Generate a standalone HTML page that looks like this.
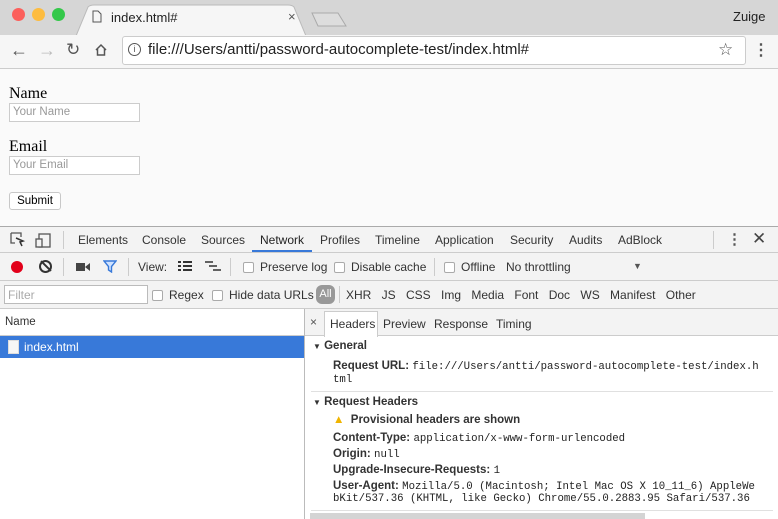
<!DOCTYPE html>
<html><head><style>
*{box-sizing:border-box;margin:0;padding:0}
body{width:778px;height:519px;overflow:hidden;background:#fafafa;font-family:"Liberation Sans",sans-serif;font-size:12px;color:#333;position:relative}
.a{position:absolute;white-space:nowrap}
.cb{display:inline-block;width:11px;height:11px;border:1px solid #aaa;border-radius:2px;background:#fff;vertical-align:-2px;margin-right:6px}
.mono{font-family:"Liberation Mono",monospace;font-size:10.7px;color:#222}
.b{font-weight:bold;color:#333;font-size:11.5px}
</style></head><body>
<!-- title bar -->
<div class="a" style="left:0;top:0;width:778px;height:35px;background:#d6d6d6"></div>
<div class="a" style="left:12px;top:8px;width:13px;height:13px;border-radius:50%;background:#fc605c"></div>
<div class="a" style="left:32px;top:8px;width:13px;height:13px;border-radius:50%;background:#fdbc40"></div>
<div class="a" style="left:52px;top:8px;width:13px;height:13px;border-radius:50%;background:#34c84a"></div>
<svg class="a" style="left:70px;top:2px" width="300" height="34"><path d="M6 34 L18 5 Q20 3 24 3 L218 3 Q222 3 224 5 L236 34Z" fill="#f6f6f6" stroke="#bbb"/><path d="M242 11 L268 11 L276 24 L248 24Z" fill="#ddd" stroke="#aaa"/></svg>
<svg class="a" style="left:92px;top:10px" width="10" height="13"><path d="M1 1H6L9 4V12H1Z" fill="none" stroke="#555"/></svg>
<div class="a" style="left:111px;top:10px;font-size:13px;color:#222">index.html#</div>
<div class="a" style="left:288px;top:9px;font-size:13px;color:#555">×</div>
<div class="a" style="left:733px;top:9px;font-size:13px;color:#222">Zuige</div>
<!-- toolbar -->
<div class="a" style="left:0;top:35px;width:778px;height:34px;background:#f6f6f6;border-bottom:1px solid #ccc"></div>
<div class="a" style="left:10px;top:40px;font-size:18px;color:#555">←</div>
<div class="a" style="left:38px;top:40px;font-size:18px;color:#bbb">→</div>
<div class="a" style="left:66px;top:40px;font-size:17px;color:#555">↻</div>
<svg class="a" style="left:94px;top:43px" width="14" height="14"><path d="M2 7L7 2L12 7M3.5 6V12H10.5V6" fill="none" stroke="#555" stroke-width="1.5"/></svg>
<div class="a" style="left:122px;top:36px;width:624px;height:29px;background:#fff;border:1px solid #ccc;border-radius:3px"></div>
<div class="a" style="left:128px;top:43px;width:13px;height:13px;border:1.5px solid #555;border-radius:50%;font-size:9px;text-align:center;line-height:10px;color:#555">i</div>
<div class="a" style="left:148px;top:41px;font-size:15px;color:#222">file:///Users/antti/password-autocomplete-test/index.html#</div>
<div class="a" style="left:718px;top:40px;font-size:17px;color:#555">☆</div>
<div class="a" style="left:753px;top:40px;font-size:16px;color:#555;font-weight:bold">⋮</div>
<!-- page -->
<div class="a" style="left:9px;top:85px;font-family:'Liberation Serif',serif;font-size:16px;color:#000">Name</div>
<div class="a" style="left:9px;top:103px;width:131px;height:19px;border:1px solid #ccc;background:#fff;font-size:11.5px;color:#999;padding:2px 3px">Your Name</div>
<div class="a" style="left:9px;top:138px;font-family:'Liberation Serif',serif;font-size:16px;color:#000">Email</div>
<div class="a" style="left:9px;top:156px;width:131px;height:19px;border:1px solid #ccc;background:#fff;font-size:11.5px;color:#999;padding:2px 3px">Your Email</div>
<div class="a" style="left:9px;top:192px;width:52px;height:18px;border:1px solid #c8c8c8;border-radius:3px;background:#fff;font-size:11.5px;color:#000;text-align:center;line-height:16px">Submit</div>
<!-- devtools -->
<div class="a" style="left:0;top:226px;width:778px;height:293px;background:#fff;border-top:1px solid #aaa"></div>
<div class="a" style="left:0;top:227px;width:778px;height:26px;background:#f3f3f3;border-bottom:1px solid #ccc"></div>
<svg class="a" style="left:10px;top:232px" width="44" height="16"><path d="M1 1H11V5M1 1V11H5" fill="none" stroke="#555" stroke-width="1.3"/><path d="M6 6L13 9L10 10L12 14" fill="none" stroke="#333" stroke-width="1.5"/><rect x="29" y="2" width="11" height="13" fill="none" stroke="#555" stroke-width="1.3"/><rect x="26" y="7" width="6" height="8" fill="#f3f3f3" stroke="#555" stroke-width="1.3"/></svg>
<div class="a" style="left:63px;top:231px;width:1px;height:18px;background:#ccc"></div>
<div class="a" style="left:78px;top:233px;color:#333">Elements</div>
<div class="a" style="left:142px;top:233px;color:#333">Console</div>
<div class="a" style="left:201px;top:233px;color:#333">Sources</div>
<div class="a" style="left:260px;top:233px;color:#222">Network</div>
<div class="a" style="left:252px;top:250px;width:60px;height:2px;background:#3879d9"></div>
<div class="a" style="left:320px;top:233px;color:#333">Profiles</div>
<div class="a" style="left:375px;top:233px;color:#333">Timeline</div>
<div class="a" style="left:435px;top:233px;color:#333">Application</div>
<div class="a" style="left:510px;top:233px;color:#333">Security</div>
<div class="a" style="left:569px;top:233px;color:#333">Audits</div>
<div class="a" style="left:618px;top:233px;color:#333">AdBlock</div>
<div class="a" style="left:713px;top:231px;width:1px;height:18px;background:#ccc"></div>
<div class="a" style="left:727px;top:230px;font-size:15px;font-weight:bold;color:#555">⋮</div>
<div class="a" style="left:752px;top:229px;font-size:17px;color:#444">✕</div>
<!-- row2 -->
<div class="a" style="left:0;top:253px;width:778px;height:28px;background:#f3f3f3;border-bottom:1px solid #ccc"></div>
<div class="a" style="left:11px;top:261px;width:12px;height:12px;border-radius:50%;background:#e2001a"></div>
<div class="a" style="left:39px;top:260px;width:13px;height:13px;border-radius:50%;border:2px solid #333"></div>
<div class="a" style="left:45px;top:259px;width:2px;height:14px;background:#333;transform:rotate(-45deg)"></div>
<div class="a" style="left:63px;top:258px;width:1px;height:18px;background:#ccc"></div>
<svg class="a" style="left:76px;top:262px" width="14" height="10"><rect x="0" y="1" width="9" height="8" fill="#444"/><path d="M9 5L14 1V9Z" fill="#444"/></svg>
<svg class="a" style="left:103px;top:260px" width="14" height="13"><path d="M1 1H13L8.5 6.5V12L5.5 10V6.5Z" fill="#cfe2ff" stroke="#3879d9" stroke-width="1.4"/></svg>
<div class="a" style="left:128px;top:258px;width:1px;height:18px;background:#ccc"></div>
<div class="a" style="left:138px;top:260px;color:#333">View:</div>
<svg class="a" style="left:178px;top:261px" width="14" height="10"><path d="M0 1H3M5 1H14M0 5H3M5 5H14M0 9H3M5 9H14" stroke="#333" stroke-width="2"/></svg>
<svg class="a" style="left:205px;top:261px" width="16" height="10"><path d="M0 1H8M4 5H12M8 9H16" stroke="#333" stroke-width="1.6"/></svg>
<div class="a" style="left:230px;top:258px;width:1px;height:18px;background:#ccc"></div>
<div class="a" style="left:243px;top:260px;color:#333"><span class="cb"></span>Preserve log</div>
<div class="a" style="left:334px;top:260px;color:#333"><span class="cb"></span>Disable cache</div>
<div class="a" style="left:434px;top:258px;width:1px;height:18px;background:#ccc"></div>
<div class="a" style="left:444px;top:260px;color:#333"><span class="cb"></span>Offline</div>
<div class="a" style="left:506px;top:260px;color:#333">No throttling</div>
<div class="a" style="left:633px;top:261px;font-size:9px;color:#555">▼</div>
<!-- row3 -->
<div class="a" style="left:0;top:281px;width:778px;height:28px;background:#f3f3f3;border-bottom:1px solid #ccc"></div>
<div class="a" style="left:4px;top:285px;width:144px;height:19px;border:1px solid #bbb;background:#fff;color:#aaa;padding:2px 3px">Filter</div>
<div class="a" style="left:152px;top:288px;color:#333"><span class="cb"></span>Regex</div>
<div class="a" style="left:212px;top:288px;color:#333"><span class="cb"></span>Hide data URLs</div>
<div class="a" style="left:316px;top:285px;width:19px;height:19px;border-radius:6px;background:#999;color:#fff;font-size:11px;text-align:center;line-height:19px">All</div>
<div class="a" style="left:339px;top:286px;width:1px;height:17px;background:#ccc"></div>
<div class="a" style="left:346px;top:288px;color:#333;word-spacing:7px">XHR JS CSS Img Media Font Doc WS Manifest Other</div>
<!-- left pane -->
<div class="a" style="left:0;top:309px;width:305px;height:27px;border-bottom:1px solid #ccc;background:#fff"></div>
<div class="a" style="left:5px;top:316px;font-size:11.5px;color:#333">Name</div>
<div class="a" style="left:0;top:336px;width:305px;height:22px;background:#3879d9"></div>
<div class="a" style="left:8px;top:340px;width:11px;height:14px;background:#f6f6f6;border:1px solid #ddd"></div>
<div class="a" style="left:24px;top:340px;color:#fff">index.html</div>
<div class="a" style="left:304px;top:309px;width:1px;height:210px;background:#bbb"></div>
<!-- right pane -->
<div class="a" style="left:305px;top:309px;width:473px;height:27px;border-bottom:1px solid #ccc;background:#f3f3f3"></div>
<div class="a" style="left:310px;top:315px;color:#555">×</div>
<div class="a" style="left:324px;top:311px;width:54px;height:26px;background:#fff;border:1px solid #ccc;border-bottom:none"></div>
<div class="a" style="left:330px;top:317px;color:#333">Headers</div>
<div class="a" style="left:383px;top:317px;color:#333">Preview</div>
<div class="a" style="left:434px;top:317px;color:#333">Response</div>
<div class="a" style="left:496px;top:317px;color:#333">Timing</div>
<div class="a b" style="left:313px;top:340px"><span style="font-size:8px">▼</span> General</div>
<div class="a" style="left:333px;top:358px"><span class="b">Request URL:</span> <span class="mono">file:///Users/antti/password-autocomplete-test/index.h</span></div>
<div class="a mono" style="left:333px;top:374px">tml</div>
<div class="a" style="left:311px;top:391px;width:462px;height:1px;background:#e0e0e0"></div>
<div class="a b" style="left:313px;top:396px"><span style="font-size:8px">▼</span> Request Headers</div>
<div class="a b" style="left:333px;top:414px"><span style="color:#f0b400">▲</span>&nbsp; Provisional headers are shown</div>
<div class="a" style="left:333px;top:430px"><span class="b">Content-Type:</span> <span class="mono">application/x-www-form-urlencoded</span></div>
<div class="a" style="left:333px;top:446px"><span class="b">Origin:</span> <span class="mono">null</span></div>
<div class="a" style="left:333px;top:462px"><span class="b">Upgrade-Insecure-Requests:</span> <span class="mono">1</span></div>
<div class="a" style="left:333px;top:478px"><span class="b">User-Agent:</span> <span class="mono">Mozilla/5.0 (Macintosh; Intel Mac OS X 10_11_6) AppleWe</span></div>
<div class="a mono" style="left:333px;top:493px">bKit/537.36 (KHTML, like Gecko) Chrome/55.0.2883.95 Safari/537.36</div>
<div class="a" style="left:311px;top:510px;width:462px;height:1px;background:#e0e0e0"></div>
<div class="a" style="left:310px;top:513px;width:335px;height:6px;background:#d4d4d4"></div>
</body></html>
